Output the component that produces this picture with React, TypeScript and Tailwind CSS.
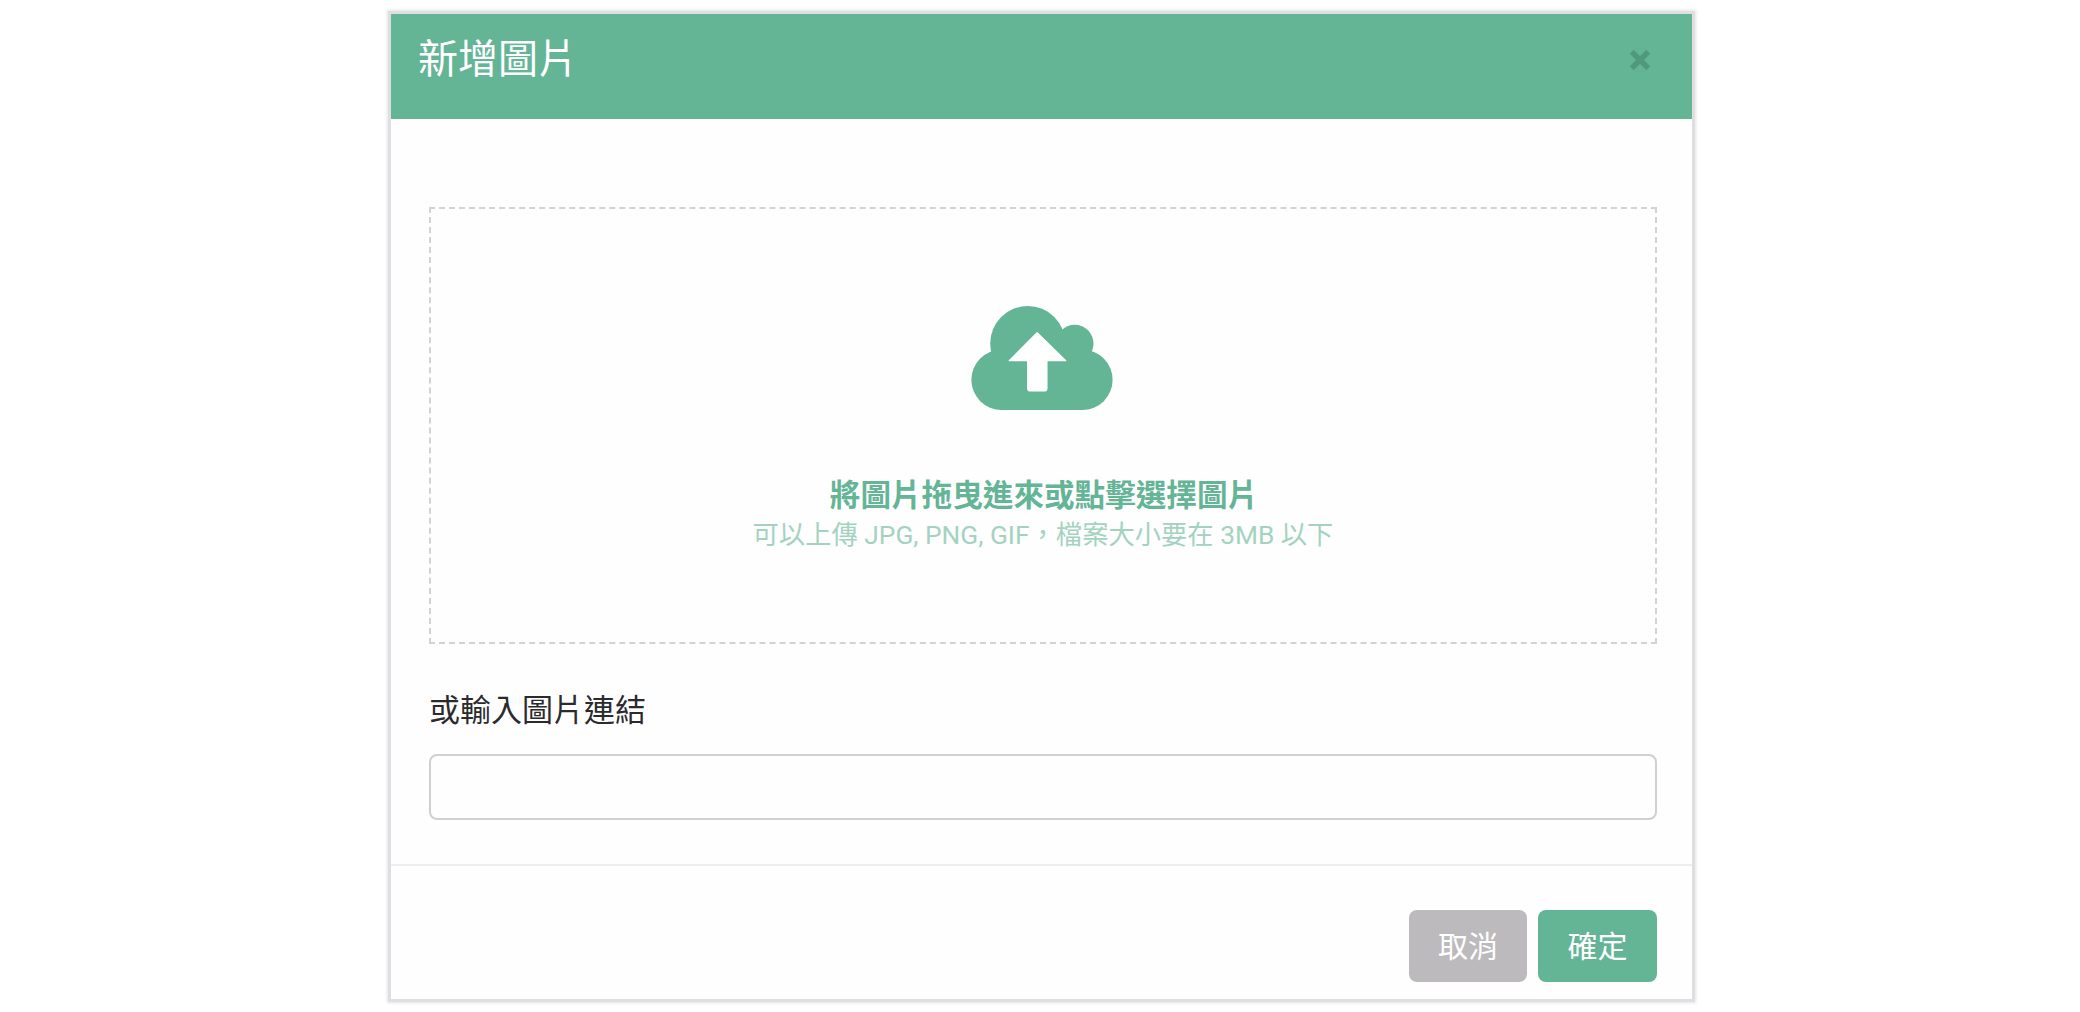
export default function App() {
  return (
    <div className="min-h-[1012px] bg-white flex justify-center pl-[3px] pt-[11px] font-['Roboto','Noto_Sans_CJK_TC',sans-serif]">
      <div className="w-[1307px] h-[991px] border-[3px] border-[#dfdee1] bg-[#fefefe] shadow-[0_0_3px_1px_#e4e3e6] flex flex-col">
        <div className="h-[105px] shrink-0 bg-[#64b596] flex items-center justify-between pl-[27px] pr-[41px] pb-[13px]">
          <h1 className="text-[40px] leading-[48px] font-normal text-white">新增圖片</h1>
          <button className="w-[22px] h-[22px] text-[#4f9a7d]" aria-label="close">
            <svg viewBox="0 0 20 20" className="w-[22px] h-[22px]">
              <path d="M2.5 2.5 17.5 17.5M17.5 2.5 2.5 17.5" stroke="currentColor" strokeWidth="5" fill="none" />
            </svg>
          </button>
        </div>

        <div className="flex-1 pl-[38px] pr-[35px] pt-[88px]">
          <div className="h-[437px] border-2 border-dashed border-[#d3d2d4] flex flex-col items-center pt-[97px]">
            <svg viewBox="97 45 421 310" className="w-[142px] h-[104px] mr-[2px]">
              <g fill="#64b596">
                <circle cx="265" cy="157" r="112" />
                <circle cx="405" cy="157" r="56" />
                <circle cx="187" cy="265" r="90" />
                <circle cx="428" cy="265" r="90" />
                <rect x="187" y="200" width="241" height="155" />
                <rect x="300" y="150" width="130" height="80" />
              </g>
              <path
                d="M293 125 378 208H322V290Q322 298 314 298H273Q265 298 265 290V208H210Z"
                fill="#fff"
                stroke="#fff"
                strokeWidth="4"
                strokeLinejoin="round"
              />
            </svg>
            <p className="mt-[66px] ml-[2px] text-[30.6px] leading-[40px] font-bold text-[#64b596]">將圖片拖曳進來或點擊選擇圖片</p>
            <p className="mt-[1px] text-[26.3px] leading-[36px] text-[#a3d3c0]">可以上傳 JPG, PNG, GIF，檔案大小要在 3MB 以下</p>
          </div>

          <label className="block mt-[45px] text-[31px] leading-[44px] text-[#2b2b2e]">或輸入圖片連結</label>
          <input className="block mt-[21px] w-full h-[66px] border-2 border-[#d0cfd2] rounded-lg bg-[#fefefe] outline-none" />
        </div>

        <div className="h-[135px] shrink-0 border-t-2 border-[#efedf0] flex justify-end gap-[11px] pr-[35px] pt-[44px]">
          <button className="w-[118px] h-[72px] rounded-lg bg-[#bcbabd] text-[30px] text-white">取消</button>
          <button className="w-[119px] h-[72px] rounded-lg bg-[#64b596] text-[30px] text-white">確定</button>
        </div>
      </div>
    </div>
  );
}
